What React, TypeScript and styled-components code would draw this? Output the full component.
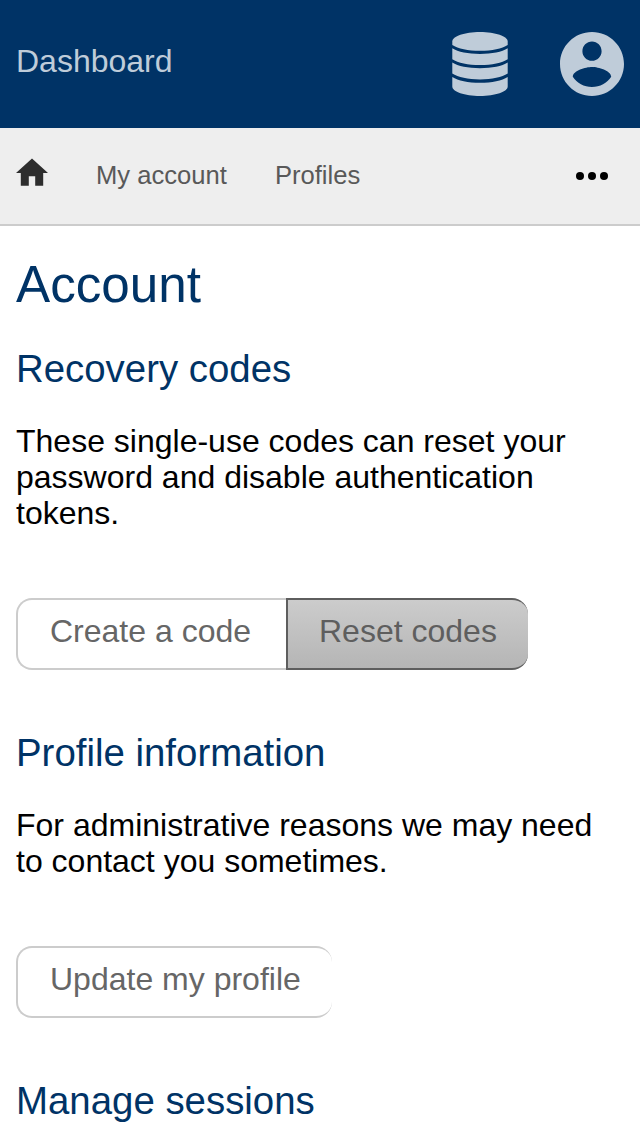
import React from "react";
import styled, { createGlobalStyle } from "styled-components";

const GlobalStyle = createGlobalStyle`
  *, *::before, *::after { box-sizing: border-box; }
  html { overflow: hidden; }
  body {
    margin: 0;
    background: #fff;
    color: #000;
    font: 32px/36px "Liberation Sans", Arial, sans-serif;
  }
`;

const Page = styled.div`
  height: 1136px;
  overflow: hidden;
`;

const Header = styled.header`
  display: flex;
  align-items: center;
  justify-content: space-between;
  height: 128px;
  padding: 0 16px;
  background: #003366;
  color: #bfccd9;
`;

const Brand = styled.span`
  padding-bottom: 6px;
`;

const HeaderIcons = styled.div`
  display: flex;
  align-items: center;
  gap: 52px;

  svg { display: block; fill: currentColor; }
`;

const Nav = styled.nav`
  display: flex;
  align-items: center;
  height: 98px;
  padding: 0 32px 0 16px;
  background: #eeeeee;
  border-bottom: 2px solid #cccccc;
  color: #595959;
  font-size: 25.6px;
  line-height: 30px;
`;

const HomeIcon = styled.svg`
  width: 32px;
  height: 32px;
  margin: -6px 48px 0 0;
  fill: #2d2d2d;
`;

const NavLink = styled.a`
  margin-right: 48px;
  padding-bottom: 2px;
`;

const Dots = styled.div`
  display: flex;
  gap: 4px;
  margin-left: auto;
`;

const Dot = styled.i`
  width: 8px;
  height: 8px;
  border-radius: 50%;
  background: #000;
`;

const Main = styled.main`
  padding: 30px 16px 0;
`;

const Title = styled.h1`
  margin: 0 0 33px;
  color: #003366;
  font-size: 51.2px;
  font-weight: 400;
  line-height: 58px;
`;

const Section = styled.section`
  margin-bottom: 61px;
`;

const Heading = styled.h2`
  margin: 0 0 32px;
  color: #003366;
  font-size: 38.4px;
  font-weight: 400;
  line-height: 44px;
`;

const Text = styled.p`
  margin: 0 0 67px;
`;

const ButtonGroup = styled.div`
  display: flex;
`;

const Button = styled.button<{ $width: number; $active?: boolean; $first?: boolean; $last?: boolean }>`
  width: ${(p) => p.$width}px;
  height: 72px;
  margin: 0;
  padding: 0 0 7px ${(p) => (p.$first ? 32 : 31)}px;
  border: 2px solid ${(p) => (p.$active ? "#5e5e5e" : "#cccccc")};
  border-right-width: 0;
  border-radius: ${(p) => `${p.$first ? 16 : 0}px ${p.$last ? 16 : 0}px ${p.$last ? 16 : 0}px ${p.$first ? 16 : 0}px`};
  background: ${(p) => (p.$active ? "linear-gradient(#cccccc, #b5b5b5)" : "#fff")};
  color: ${(p) => (p.$active ? "#5e5e5e" : "#666666")};
  font: inherit;
  text-align: left;
  white-space: nowrap;
`;

const DatabaseIcon = () => (
  <svg width="56" height="64" viewBox="0 0 56 64">
    <path d="M.3 9.500C.3 4.300 12.600 0 28 0s27.700 4.300 27.700 9.500V12.900C50 16.600 40 18.700 28 18.700S6 16.600 .3 12.900z" />
    <path d="M.3 16.200C6 19.900 16 21.900 28 21.900S50 19.900 55.700 16.200V27.200C50 31 40 33 28 33S6 31 .3 27.200z" />
    <path d="M.3 30.500C6 34.200 16 36.200 28 36.200S50 34.200 55.700 30.500V41.500C50 45.300 40 47.400 28 47.400S6 45.300 .3 41.500z" />
    <path d="M.3 44.900C6 48.600 16 50.700 28 50.700S50 48.600 55.700 44.900V54.500C55.700 59.700 43.400 64 28 64S.3 59.700 .3 54.500z" />
  </svg>
);

const AccountIcon = () => (
  <svg width="64" height="64" viewBox="2 2 20 20">
    <path d="M12 2C6.48 2 2 6.48 2 12s4.480 10 10 10 10-4.480 10-10S17.520 2 12 2zm0 3c1.660 0 3 1.340 3 3s-1.340 3-3 3-3-1.340-3-3 1.340-3 3-3zm0 14.200c-2.500 0-4.710-1.280-6-3.220.030-1.990 4-3.080 6-3.080 1.990 0 5.970 1.090 6 3.080-1.290 1.940-3.500 3.220-6 3.220z" />
  </svg>
);

export default function App() {
  return (
    <Page>
      <GlobalStyle />
      <Header>
        <Brand>Dashboard</Brand>
        <HeaderIcons>
          <DatabaseIcon />
          <AccountIcon />
        </HeaderIcons>
      </Header>
      <Nav>
        <HomeIcon viewBox="2 2 20 20">
          <path d="M10 20v-6h4v6h5v-8h3L12 3 2 12h3v8z" />
        </HomeIcon>
        <NavLink>My account</NavLink>
        <NavLink>Profiles</NavLink>
        <Dots>
          <Dot />
          <Dot />
          <Dot />
        </Dots>
      </Nav>
      <Main>
        <Title>Account</Title>
        <Section>
          <Heading>Recovery codes</Heading>
          <Text>These single-use codes can reset your password and disable authentication tokens.</Text>
          <ButtonGroup>
            <Button $width={270} $first>Create a code</Button>
            <Button $width={242} $active $last>Reset codes</Button>
          </ButtonGroup>
        </Section>
        <Section>
          <Heading>Profile information</Heading>
          <Text>For administrative reasons we may need to contact you sometimes.</Text>
          <ButtonGroup>
            <Button $width={316} $first $last>Update my profile</Button>
          </ButtonGroup>
        </Section>
        <Section>
          <Heading>Manage sessions</Heading>
        </Section>
      </Main>
    </Page>
  );
}
